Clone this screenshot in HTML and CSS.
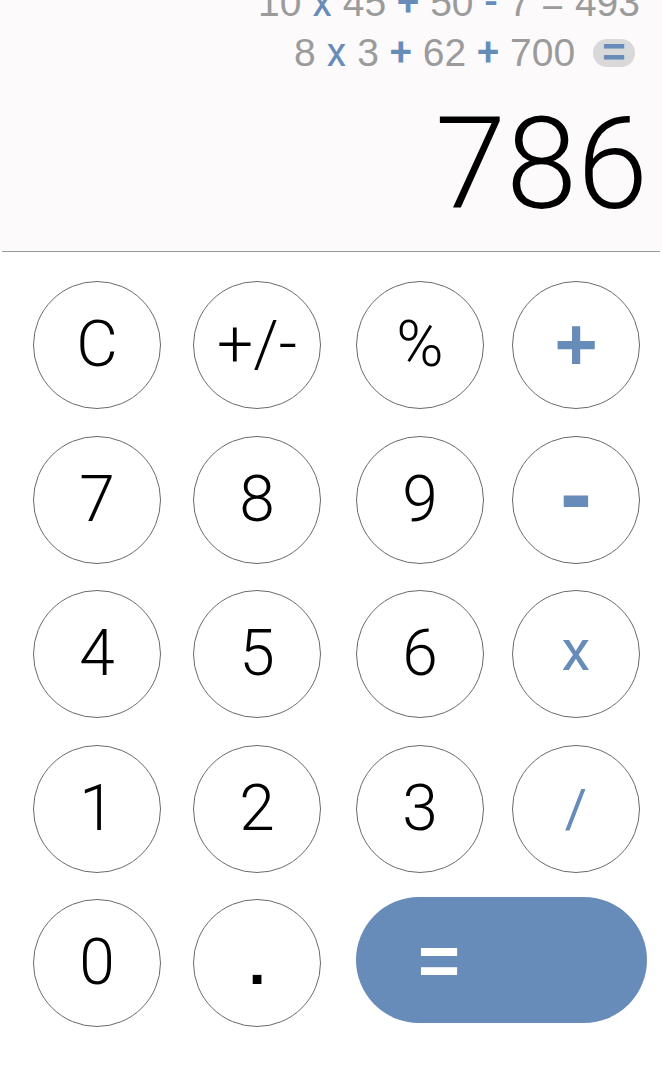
FILE: index.html
```html
<!DOCTYPE html>
<html lang="en">
<head>
<meta charset="utf-8">
<title>Calculator</title>
<link rel="stylesheet" href="styles.css">
</head>
<body>
<main class="calc">
  <section class="display">
    <div class="history">
      <div class="line">10 <span class="op op-x">x</span> 45 <span class="op">+</span> 50 <span class="op">-</span> 7 = 493</div>
      <div class="line current">8 <span class="op op-x">x</span> 3 <span class="op">+</span> 62 <span class="op">+</span> 700 <span class="eq-pill">=</span></div>
    </div>
    <div class="result">786</div>
  </section>
  <div class="divider"></div>
  <section class="keypad">
    <button class="key">C</button>
    <button class="key">+/-</button>
    <button class="key">%</button>
    <button class="key op-key plus">+</button>

    <button class="key">7</button>
    <button class="key">8</button>
    <button class="key">9</button>
    <button class="key op-key minus">-</button>

    <button class="key">4</button>
    <button class="key">5</button>
    <button class="key">6</button>
    <button class="key op-key times">x</button>

    <button class="key">1</button>
    <button class="key">2</button>
    <button class="key">3</button>
    <button class="key op-key divide">/</button>

    <button class="key">0</button>
    <button class="key dot">.</button>
    <button class="equals"><span class="equals-label">=</span></button>
  </section>
</main>
</body>
</html>
```

FILE: styles.css
```css
* {
  box-sizing: border-box;
}

html, body {
  margin: 0;
  padding: 0;
  background: #ffffff;
}

body {
  font-family: Roboto, "Liberation Sans", sans-serif;
  color: #000;
  overflow: hidden;
}

.calc {
  width: 662px;
  height: 1073px;
  display: flex;
  flex-direction: column;
}

.display {
  background: #fcfafb;
  height: 251px;
  display: flex;
  flex-direction: column;
  overflow: hidden;
}

.history {
  margin-top: -22px;
  padding-right: 22px;
  display: flex;
  flex-direction: column;
  align-items: flex-end;
}

.line {
  font-family: "Liberation Sans", sans-serif;
  font-size: 39px;
  line-height: 50px;
  font-weight: 400;
  color: #9b9b9b;
  white-space: pre;
  display: flex;
  align-items: center;
}

.line.current {
  padding-right: 5px;
}

.op {
  font-family: Roboto, "Liberation Sans", sans-serif;
  font-size: 40px;
  color: #678cb9;
  font-weight: 500;
}

.op-x {
  font-weight: 400;
}

.eq-pill {
  display: inline-flex;
  align-items: center;
  justify-content: center;
  width: 42px;
  height: 28px;
  margin-left: 7px;
  border-radius: 14px;
  background: #d9d9d9;
  color: #678cb9;
  font-family: "Liberation Sans", sans-serif;
  font-weight: 700;
  font-size: 40px;
  line-height: 28px;
  padding-bottom: 2px;
}

.result {
  margin-top: 21px;
  padding-right: 14px;
  text-align: right;
  font-size: 128px;
  line-height: 130px;
  font-weight: 300;
  color: #000;
}

.divider {
  height: 1px;
  margin: 0 2px;
  background: #9b9b9b;
}

.keypad {
  display: grid;
  grid-template-columns: 160px 163px 156px 128px;
  grid-auto-rows: 128px;
  row-gap: 26.5px;
  padding: 29px 0 0 33px;
}

.key {
  width: 128px;
  height: 128px;
  border-radius: 50%;
  border: 1px solid #6a6a6a;
  background: #fff;
  padding: 0;
  display: flex;
  align-items: center;
  justify-content: center;
  font-family: Roboto, "Liberation Sans", sans-serif;
  font-weight: 300;
  font-size: 64px;
  line-height: 1;
  color: #000;
}

.dot {
  font-family: "Liberation Sans", sans-serif;
  font-weight: 700;
  font-size: 62px;
}

.op-key {
  color: #678cb9;
}

.plus {
  font-family: "Liberation Sans", sans-serif;
  font-weight: 700;
  font-size: 74px;
}

.minus {
  font-family: "Liberation Sans", sans-serif;
  font-weight: 700;
  font-size: 96px;
  padding-bottom: 14px;
}

.times {
  font-weight: 400;
  font-size: 58px;
  padding-bottom: 8px;
}

.divide {
  font-weight: 400;
  font-size: 54px;
}

.equals {
  grid-column: 3 / 5;
  width: 291px;
  height: 126px;
  margin-top: -2px;
  border: none;
  border-radius: 63px;
  background: #678cb9;
  padding: 0 0 0 62px;
  display: flex;
  align-items: center;
  justify-content: flex-start;
}

.equals-label {
  font-family: "Liberation Sans", sans-serif;
  font-weight: 700;
  font-size: 72px;
  line-height: 1;
  color: #fff;
}
```
